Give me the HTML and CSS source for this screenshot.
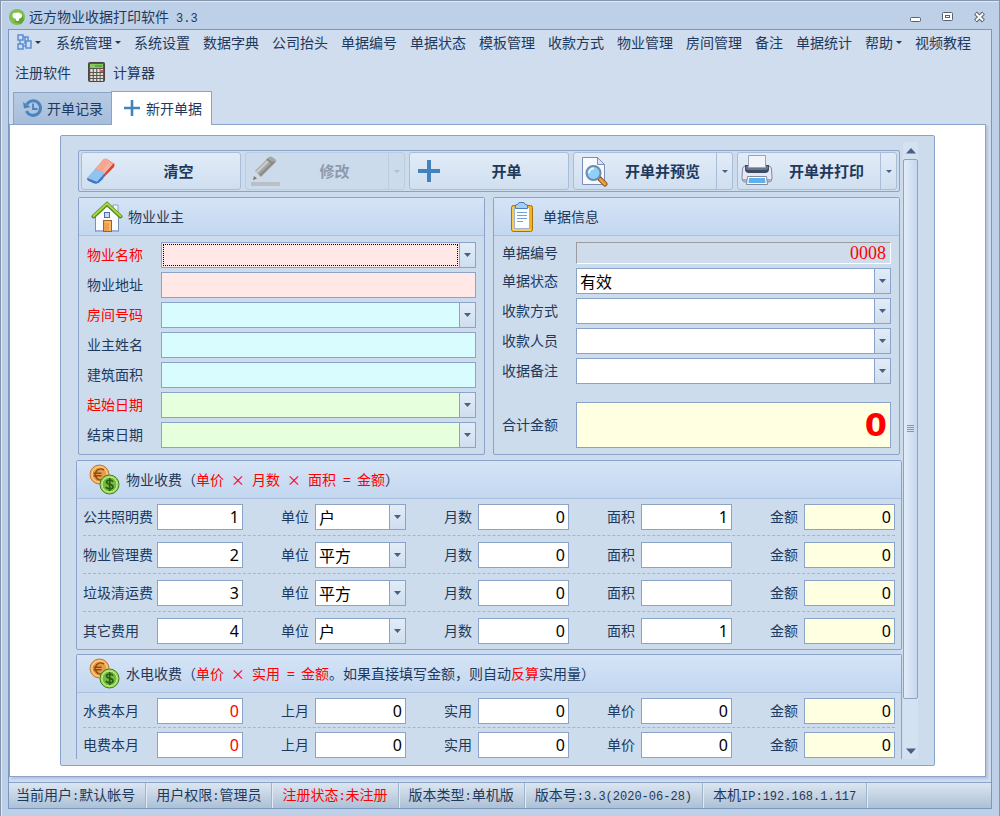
FILE: index.html
```html
<!DOCTYPE html>
<html lang="zh-CN">
<head>
  <meta charset="UTF-8">
  <meta name="viewport" content="width=device-width, initial-scale=1.0">
  <title>远方物业收据打印软件 3.3</title>
  <link rel="stylesheet" href="styles.css">
</head>
<body>
  <div class="window">
    <header class="titlebar">
      <svg class="app-icon" width="16" height="16" viewBox="0 0 16 16">
        <circle cx="8" cy="8" r="8" fill="#7fc04a"/>
        <path d="M5 13l7 2 3-4-2-6z" fill="#5fa52f"/>
        <path d="M3.500 6.500c0-2 1.500-3 3-2.500 1.500-1 4-.8 5 .6 1.600.4 2 2.200 1.200 3.400-.5 1.200-1.600 1.400-2.200 1.200L9.600 12H7.400L6.600 9.500c-2 .2-3.300-1.300-3.100-3z" fill="#fff"/>
      </svg>
      <h1>远方物业收据打印软件<span class="latin title-version">3.3</span></h1>
      <div class="window-buttons">
        <button aria-label="最小化"><svg width="12" height="12" viewBox="0 0 12 12"><rect x=".5" y="6.500" width="10" height="4" rx="1" fill="#fff" stroke="#59626e"/></svg></button>
        <button aria-label="最大化"><svg width="12" height="12" viewBox="0 0 12 12"><rect x=".5" y="1.500" width="10" height="8" rx="1" fill="#fff" stroke="#59626e"/><rect x="3.500" y="4.500" width="4" height="2" fill="#fff" stroke="#59626e"/></svg></button>
        <button aria-label="关闭"><svg width="12" height="12" viewBox="0 0 12 12"><path d="M1.500 2l8 8M9.500 2l-8 8" stroke="#59626e" stroke-width="4"/><path d="M2 2.500l7 7M9 2.500l-7 7" stroke="#fff" stroke-width="2"/></svg></button>
      </div>
    </header>

    <div class="frame">
      <nav class="menu">
        <button class="menu-icon has-caret" aria-label="窗口"><svg width="15" height="16" viewBox="0 0 15 16" fill="none" stroke="#5c8fd6" stroke-width="1.500"><path d="M1 1h5v5H1zM1 10h5v5H1zM9 7h5v7H9zM6 3h5v4M3 6v4M6 12h3M8 3v7"/></svg></button>
        <button class="has-caret">系统管理</button>
        <button>系统设置</button>
        <button>数据字典</button>
        <button>公司抬头</button>
        <button>单据编号</button>
        <button>单据状态</button>
        <button>模板管理</button>
        <button>收款方式</button>
        <button>物业管理</button>
        <button>房间管理</button>
        <button>备注</button>
        <button>单据统计</button>
        <button class="has-caret">帮助</button>
        <button>视频教程</button>
        <button>注册软件</button>
        <button class="menu-calc">
          <svg width="17" height="20" viewBox="0 0 17 20">
            <rect x=".5" y=".5" width="16" height="19" rx="1" fill="#5b5350" stroke="#4b4644"/>
            <rect x="2" y="2" width="13" height="4" fill="#83c95c"/><path d="M7 4h7" stroke="#47802a"/>
            <path d="M3.500 7v12M7 7v12M10.500 7v12M13.800 7v12" stroke="#e4dfd8" stroke-width="2.400"/>
            <path d="M1 10.500h15M1 13.500h15M1 16.500h15" stroke="#5b5350"/>
            <rect x="12.600" y="8" width="2.600" height="2" fill="#f04c3c"/>
          </svg>
          计算器
        </button>
      </nav>

      <div class="tabs" role="tablist">
        <button class="tab" role="tab">
          <svg width="20" height="20" viewBox="0 0 20 20" fill="none" stroke="#4b83bf"><path d="M3.800 6.500A7.300 7.300 0 1 1 3.500 13" stroke-width="3"/><path d="M0 4l1 6.500 6.500-1.500z" fill="#4b83bf" stroke="none"/><path d="M10 5.500V11h4.500" stroke-width="1.800"/></svg>
          开单记录
        </button>
        <button class="tab active" role="tab" aria-selected="true">
          <svg width="16" height="16" viewBox="0 0 16 16"><path d="M8 0v16M0 8h16" stroke="#4282bd" stroke-width="2.600"/></svg>
          新开单据
        </button>
      </div>

      <main class="page">
        <form class="panel">
          <div class="content">
            <div class="toolbar">
              <div class="tool">
                <button type="button" class="tool-main">
                  <svg width="32" height="32" viewBox="0 0 32 32">
                    <path d="M2 24L18 5q2-2 4-1l6 4q2 1 1 3L14 27q-2 2-5 1l-5-2q-2-1-2-2z" fill="#e9503f"/>
                    <path d="M10 14L18 5q2-2 4-1l7 5-9 10z" fill="#f8a592"/>
                    <path d="M20 18l9-10q1 2 0 4L18 23z" fill="#d9422f"/>
                    <path d="M18 16l7-8M19 18l8-9" stroke="#fff" stroke-opacity=".35"/>
                    <path d="M2 23l8-9 10 4-8 9z" fill="#8fc4f2"/>
                    <path d="M2 23l10 4v1.800q-2 .2-4-.8l-4-2q-2-1-2-3zM12 27l8-9-2 6-5 4.500z" fill="#2f7fd0"/>
                  </svg>
                  <span>清空</span>
                </button>
              </div>
              <div class="tool disabled">
                <button type="button" class="tool-main" disabled>
                  <svg width="32" height="32" viewBox="0 0 32 32">
                    <rect x="2" y="27" width="29" height="4" rx="1" fill="#b9c0c8"/>
                    <path d="M4 25l2-8 6 5z" fill="#d8d8d8"/><path d="M4 25l1-4 3 2.500z" fill="#777"/>
                    <path d="M6 16L20 2q1.500-1 3 0l3 2q2 1.500 1 3L12 22z" fill="#a6a6a6"/>
                    <path d="M7.500 17.500L20.500 4.500" stroke="#cfcfcf" stroke-width="2"/><path d="M11 20.500L25 6.500" stroke="#8a8a8a" stroke-width="2"/>
                    <path d="M18 4l6 5" stroke="#878787" stroke-width="2"/>
                  </svg>
                  <span>修改</span>
                </button>
                <button type="button" class="tool-drop" disabled aria-label="修改选项"></button>
              </div>
              <div class="tool">
                <button type="button" class="tool-main">
                  <svg width="32" height="32" viewBox="0 0 32 32"><path d="M16 5v22M5 16h22" stroke="#4282bd" stroke-width="4"/></svg>
                  <span>开单</span>
                </button>
              </div>
              <div class="tool">
                <button type="button" class="tool-main">
                  <svg width="32" height="32" viewBox="0 0 32 32">
                    <path d="M5.500 2.500h15l7 7v20h-22z" fill="#f7f9fd" stroke="#7c8fb8"/><path d="M20.500 2.500v7h7z" fill="#dbe4f3" stroke="#7c8fb8"/>
                    <path d="M22 23l6 6" stroke="#8a5a20" stroke-width="5" stroke-linecap="round"/><path d="M23.500 24.500l4.500 4.500" stroke="#f0a040" stroke-width="3" stroke-linecap="round"/>
                    <circle cx="16.500" cy="18" r="7" fill="#8fd0f5" stroke="#6f8cb0" stroke-width="2"/><path d="M12 18a4.500 4.500 0 0 1 5-4.500" fill="none" stroke="#e8f7ff" stroke-width="2"/>
                  </svg>
                  <span>开单并预览</span>
                </button>
                <button type="button" class="tool-drop" aria-label="预览选项"></button>
              </div>
              <div class="tool">
                <button type="button" class="tool-main">
                  <svg width="32" height="32" viewBox="0 0 32 32">
                    <path d="M4 11q-2 0-2.500 3L1 23q0 4 3 4h24q3 0 3-4l-.5-9q-.5-3-2.500-3z" fill="#e6e9f1" stroke="#8188a0"/>
                    <path d="M2 24h28q-.5 3-2 3H4q-2 0-2-3z" fill="#a5abc0"/>
                    <path d="M4 10h24v4q0 4-4 4H8q-4 0-4-4z" fill="#3c4a62"/><path d="M5 11h22v2q0 2-3 2H8q-3 0-3-2z" fill="#66758f"/>
                    <path d="M7.500.500h17v12h-17z" fill="#f1f3f8" stroke="#9ba2b5"/>
                    <path d="M6.500 21.500h19l1 8h-21z" fill="#fff" stroke="#8188a0"/><path d="M8 23h16l.5 5h-17z" fill="#5fb0ee"/>
                  </svg>
                  <span>开单并打印</span>
                </button>
                <button type="button" class="tool-drop" aria-label="打印选项"></button>
              </div>
            </div>

            <div class="columns">
              <section class="group">
                <h2 class="group-title">
                  <svg width="32" height="32" viewBox="0 0 32 32">
                    <path d="M22 4h5v10h-5z" fill="#f4f6fb" stroke="#8ea0c8"/>
                    <path d="M4.500 15L16 5l11.500 10v15.500h-23z" fill="#fbfcff" stroke="#7c90bf"/>
                    <path d="M5 30h22" stroke="#9fb0d4" stroke-width="2"/>
                    <path d="M2.500 15.500L16 3l13.500 12.500" fill="none" stroke="#5b8a1c" stroke-width="4" stroke-linecap="round"/>
                    <path d="M2.500 15L16 2.500 29.500 15" fill="none" stroke="#a6d84a" stroke-width="2" stroke-linecap="round"/>
                    <rect x="13.500" y="11.500" width="5" height="5" fill="#c8dcf8" stroke="#4f6ca8"/>
                    <rect x="12.500" y="19.500" width="8" height="11" fill="#f0a048" stroke="#a86018"/><path d="M14 21h5v9" fill="none" stroke="#fbd08c"/>
                  </svg>
                  <span>物业业主</span>
                </h2>
                <div class="fields">
                  <div class="field required">
                    <label for="estateName">物业名称</label>
                    <div class="combo pink focused"><select id="estateName"><option></option></select></div>
                  </div>
                  <div class="field">
                    <label for="estateAddr">物业地址</label>
                    <input type="text" id="estateAddr" class="pink">
                  </div>
                  <div class="field required">
                    <label for="roomNo">房间号码</label>
                    <div class="combo cyan"><select id="roomNo"><option></option></select></div>
                  </div>
                  <div class="field">
                    <label for="owner">业主姓名</label>
                    <input type="text" id="owner" class="cyan">
                  </div>
                  <div class="field">
                    <label for="area">建筑面积</label>
                    <input type="text" id="area" class="cyan">
                  </div>
                  <div class="field required">
                    <label for="startDate">起始日期</label>
                    <div class="combo green"><select id="startDate"><option></option></select></div>
                  </div>
                  <div class="field">
                    <label for="endDate">结束日期</label>
                    <div class="combo green"><select id="endDate"><option></option></select></div>
                  </div>
                </div>
              </section>

              <section class="group">
                <h2 class="group-title">
                  <svg width="32" height="32" viewBox="0 0 32 32">
                    <rect x="5.500" y="4.500" width="21" height="26" rx="2" fill="#f5b41c" stroke="#a8700c"/>
                    <path d="M7 6v23h18" fill="none" stroke="#fde07a"/>
                    <path d="M8.500 6.500h15v21h-15z" fill="#fbfdff" stroke="#9fb4d8"/>
                    <path d="M9.500 4q3 0 3.500-2.500h5q.5 2.500 3.500 2.500v3.500h-12z" fill="#a9cdf0" stroke="#4d7fbd"/>
                    <path d="M11 11.500h10M11 14.500h10M11 17.500h10M11 20.500h6" stroke="#6fa0dc"/>
                  </svg>
                  <span>单据信息</span>
                </h2>
                <div class="fields">
                  <div class="field">
                    <label for="billNo">单据编号</label>
                    <input type="text" id="billNo" class="bill-no" value="0008" readonly>
                  </div>
                  <div class="field">
                    <label for="billState">单据状态</label>
                    <div class="combo"><select id="billState"><option>有效</option></select></div>
                  </div>
                  <div class="field">
                    <label for="payType">收款方式</label>
                    <div class="combo"><select id="payType"><option></option></select></div>
                  </div>
                  <div class="field">
                    <label for="payee">收款人员</label>
                    <div class="combo"><select id="payee"><option></option></select></div>
                  </div>
                  <div class="field">
                    <label for="remark">收据备注</label>
                    <div class="combo"><select id="remark"><option></option></select></div>
                  </div>
                  <div class="field total">
                    <label for="total">合计金额</label>
                    <input type="text" id="total" value="0" readonly>
                  </div>
                </div>
              </section>
            </div>

            <section class="group fees">
              <h2 class="group-title">
                <svg width="32" height="32" viewBox="0 0 32 32"><use href="#coins"/></svg>
                <span>物业收费（<em>单价<i class="op">×</i>月数<i class="op">×</i>面积<i class="op half">=</i>金额</em>）</span>
              </h2>
              <div class="fee-row">
                <label for="light">公共照明费</label><input type="text" id="light" value="1">
                <label for="lightUnit">单位</label><div class="combo"><select id="lightUnit"><option>户</option></select></div>
                <label for="lightMonth">月数</label><input type="text" id="lightMonth" value="0">
                <label for="lightArea">面积</label><input type="text" id="lightArea" value="1">
                <label for="lightSum">金额</label><input type="text" id="lightSum" class="sum" value="0">
              </div>
              <div class="fee-row">
                <label for="manage">物业管理费</label><input type="text" id="manage" value="2">
                <label for="manageUnit">单位</label><div class="combo"><select id="manageUnit"><option>平方</option></select></div>
                <label for="manageMonth">月数</label><input type="text" id="manageMonth" value="0">
                <label for="manageArea">面积</label><input type="text" id="manageArea">
                <label for="manageSum">金额</label><input type="text" id="manageSum" class="sum" value="0">
              </div>
              <div class="fee-row">
                <label for="trash">垃圾清运费</label><input type="text" id="trash" value="3">
                <label for="trashUnit">单位</label><div class="combo"><select id="trashUnit"><option>平方</option></select></div>
                <label for="trashMonth">月数</label><input type="text" id="trashMonth" value="0">
                <label for="trashArea">面积</label><input type="text" id="trashArea">
                <label for="trashSum">金额</label><input type="text" id="trashSum" class="sum" value="0">
              </div>
              <div class="fee-row">
                <label for="other">其它费用</label><input type="text" id="other" value="4">
                <label for="otherUnit">单位</label><div class="combo"><select id="otherUnit"><option>户</option></select></div>
                <label for="otherMonth">月数</label><input type="text" id="otherMonth" value="0">
                <label for="otherArea">面积</label><input type="text" id="otherArea" value="1">
                <label for="otherSum">金额</label><input type="text" id="otherSum" class="sum" value="0">
              </div>
            </section>

            <section class="group fees meters">
              <h2 class="group-title">
                <svg width="32" height="32" viewBox="0 0 32 32">
                  <g id="coins">
                    <circle cx="10.500" cy="10.500" r="9.500" fill="#f3b266" stroke="#c07a2c"/>
                    <circle cx="10.500" cy="10.500" r="7.500" fill="#e89b48" stroke="#fbd9a6"/>
                    <path d="M15 6a5.500 5.500 0 1 0 0 9M4.500 9.300h8M4.500 11.700h8" fill="none" stroke="#8a4e12" stroke-width="1.600"/>
                    <circle cx="20.500" cy="20.500" r="9.500" fill="#9cd85c" stroke="#3f7f1c"/>
                    <circle cx="20.500" cy="20.500" r="7.500" fill="#74bb3c" stroke="#d0f09c"/>
                    <path d="M24 17.700c-.8-2-6.500-2.200-6.500.4 0 2.800 6.500 1.600 6.500 4.600 0 2.800-6 2.600-7 .2M20.700 14v13" fill="none" stroke="#2c5e14" stroke-width="1.700"/>
                  </g>
                </svg>
                <span>水电收费（<em>单价<i class="op">×</i>实用<i class="op half">=</i>金额</em>。如果直接填写金额，则自动<em>反算</em>实用量）</span>
              </h2>
              <div class="fee-row">
                <label for="water">水费本月</label><input type="text" id="water" class="red" value="0">
                <label for="waterLast">上月</label><input type="text" id="waterLast" value="0">
                <label for="waterUsed">实用</label><input type="text" id="waterUsed" value="0">
                <label for="waterPrice">单价</label><input type="text" id="waterPrice" value="0">
                <label for="waterSum">金额</label><input type="text" id="waterSum" class="sum" value="0">
              </div>
              <div class="fee-row">
                <label for="power">电费本月</label><input type="text" id="power" class="red" value="0">
                <label for="powerLast">上月</label><input type="text" id="powerLast" value="0">
                <label for="powerUsed">实用</label><input type="text" id="powerUsed" value="0">
                <label for="powerPrice">单价</label><input type="text" id="powerPrice" value="0">
                <label for="powerSum">金额</label><input type="text" id="powerSum" class="sum" value="0">
              </div>
            </section>
          </div>

          <div class="scrollbar">
            <button type="button" aria-label="向上"><svg width="10" height="6" viewBox="0 0 10 6"><path d="M0 5.500L5 0l5 5.500z" fill="#4a5f84"/></svg></button>
            <div class="thumb"><span class="grip"></span></div>
            <div class="track"></div>
            <button type="button" aria-label="向下"><svg width="10" height="6" viewBox="0 0 10 6"><path d="M0 .500L5 6l5-5.500z" fill="#4a5f84"/></svg></button>
          </div>
        </form>
      </main>

      <footer class="statusbar">
        <span>当前用户<b class="latin">:</b>默认帐号</span>
        <span>用户权限<b class="latin">:</b>管理员</span>
        <span class="warn">注册状态<b class="latin">:</b>未注册</span>
        <span>版本类型<b class="latin">:</b>单机版</span>
        <span>版本号<b class="latin">:3.3(2020-06-28)</b></span>
        <span>本机<b class="latin">IP:192.168.1.117</b></span>
      </footer>
    </div>
  </div>
</body>
</html>
```

FILE: styles.css
```css
html, body {
  margin: 0;
  padding: 0;
}

* {
  box-sizing: border-box;
}

body {
  font-family: "Noto Sans CJK SC", sans-serif;
  font-size: 14px;
  line-height: 20px;
  color: #1e395b;
}

button, input, select {
  font: inherit;
  color: inherit;
  margin: 0;
}

button {
  padding: 0;
  border: none;
  background: none;
}

svg {
  display: block;
  flex: none;
}

.latin {
  font-family: "Liberation Mono", monospace;
  font-size: 12px;
  font-weight: normal;
}

/* window */
.window {
  display: flex;
  flex-direction: column;
  min-height: 100vh;
  padding: 0 7px 7px;
  border: 1px solid #8795ab;
  background: #bed0e7;
  box-shadow: inset 0 1px 0 #dfe9f5, inset 1px 0 0 #dfe9f5;
}

.titlebar {
  display: flex;
  align-items: center;
  height: 28px;
  padding: 4px 6px 0 1px;
}

.titlebar h1 {
  flex: 1;
  margin: 0 0 0 4px;
  font-size: 14px;
  font-weight: normal;
}

.title-version {
  margin-left: 7px;
}

.window-buttons {
  display: flex;
  gap: 20px;
}

.frame {
  flex: 1;
  display: flex;
  flex-direction: column;
  border: 1px solid #7a98bf;
  background: #cfddee;
}

/* menu */
.menu {
  display: flex;
  flex-wrap: wrap;
  column-gap: 1px;
}

.menu button {
  display: flex;
  align-items: center;
  height: 30px;
  padding: 0 6px 6px;
  white-space: nowrap;
}

.menu .menu-icon {
  padding-left: 8px;
  padding-right: 8px;
}

.has-caret::after {
  content: "";
  margin-left: 3px;
  border: 3px solid transparent;
  border-top-color: #1e395b;
  border-bottom: none;
}

.menu .menu-calc {
  gap: 8px;
  padding-left: 10px;
}

/* tabs */
.tabs {
  display: flex;
  align-items: flex-end;
  padding: 1px 4px 0;
}

.tab {
  display: flex;
  align-items: center;
  gap: 4px;
  height: 32px;
  padding: 0 8px 2px 9px;
  border: 1px solid #8ba3c8;
  border-right: none;
  border-bottom: none;
  background: linear-gradient(#b7cbe3, #a6bddb);
}

.tab.active {
  position: relative;
  height: 34px;
  margin-bottom: -1px;
  padding: 0 9px 2px 12px;
  gap: 6px;
  border-right: 1px solid #8ba3c8;
  background: #fff;
}

.page {
  flex: 1;
  display: flex;
  margin: 0 5px 5px 0;
  padding: 10px 50px;
  border: 1px solid #8ba3c8;
  background: #fff;
  box-shadow: 2px 2px 2px #b4c4da;
}

.panel {
  flex: 1;
  display: flex;
  gap: 1px;
  min-width: 0;
  padding: 6px 16px 6px 15px;
  border: 1px solid #8ba3c8;
  border-radius: 2px;
  background: #cddcec;
}

.content {
  flex: 1;
  min-width: 0;
  padding-top: 8px;
}

/* toolbar */
.toolbar {
  display: flex;
  gap: 4px;
  margin: 0 2px 5px;
  padding: 1px 2px;
  border: 1px solid #8ba3c8;
  border-radius: 2px;
}

.tool {
  flex: 1;
  display: flex;
  height: 38px;
  border: 1px solid #a9bdd9;
  border-radius: 3px;
  background: linear-gradient(#e2ecf8, #cfdeef);
}

.tool-main {
  flex: 1;
  display: flex;
  align-items: center;
  padding-left: 3px;
  font-size: 15px;
  font-weight: bold;
}

.tool-main span {
  flex: 1;
  text-align: center;
}

.tool-drop {
  display: flex;
  align-items: center;
  justify-content: center;
  width: 16px;
  border-left: 1px solid #a9bdd9;
}

.tool-drop::before {
  content: "";
  border: 3px solid transparent;
  border-top-color: #4a5f84;
  border-bottom: none;
}

.tool.disabled {
  background: #ccdbeb;
  border-color: #bccde0;
  color: #8d9aad;
}

.tool.disabled .tool-drop {
  border-color: #bccde0;
}

.tool.disabled .tool-drop::before {
  border-top-color: #b3bcc8;
}

/* groups */
.columns {
  display: grid;
  grid-template-columns: repeat(2, minmax(0, 1fr));
  gap: 8px;
  margin: 0 2px 5px;
}

.group {
  border: 1px solid #8ba3c8;
  border-radius: 2px;
}

.group-title {
  display: flex;
  align-items: center;
  gap: 5px;
  height: 38px;
  margin: 0;
  padding-left: 12px;
  border-bottom: 1px solid #a9c0de;
  background: linear-gradient(#d5e4f6, #c3d7f0);
  font-size: 14px;
  font-weight: normal;
}

.group-title span, .field label, .fee-row label {
  padding-bottom: 2px;
}

.group-title em {
  color: #f00;
  font-style: normal;
}

.op {
  display: inline-block;
  width: 14px;
  margin: 0 7px;
  text-align: center;
  font-style: normal;
}

.op.half {
  width: 7px;
}

.fields {
  display: flex;
  flex-direction: column;
  gap: 4px;
  padding: 6px 8px;
}

.field {
  display: flex;
  align-items: center;
}

.field label {
  width: 74px;
}

.field.required label {
  color: #f00;
}

.field input, .field .combo {
  flex: 1;
  min-width: 0;
}

input[type="text"], .combo {
  height: 26px;
  border: 1px solid #8ba3c8;
  border-radius: 0;
  background: #fff;
  color: #000;
}

input[type="text"] {
  width: 100%;
  min-width: 0;
  padding: 0 3px;
  font-family: "Noto Sans", sans-serif;
  font-size: 16px;
}

.combo {
  display: grid;
  grid-template-columns: minmax(0, 1fr) 16px;
  grid-template-rows: 24px;
}

.combo select {
  grid-area: 1 / 1 / 2 / 3;
  min-width: 0;
  padding: 0 18px 0 3px;
  border: none;
  border-radius: 0;
  background: none;
  appearance: none;
  font-size: 16px;
}

.combo::after {
  content: "";
  grid-area: 1 / 2;
  border-left: 1px solid #8ba3c8;
  background: url("data:image/svg+xml,%3Csvg xmlns='http://www.w3.org/2000/svg' width='7' height='4'%3E%3Cpath d='M0 0h7L3.500 4z' fill='%234a5f84'/%3E%3C/svg%3E") center no-repeat, linear-gradient(#e2ecf8, #cfdeef);
  pointer-events: none;
}

.combo.focused::before {
  content: "";
  grid-area: 1 / 1;
  margin: 1px;
  border: 1px dotted #000;
  pointer-events: none;
}

input.pink, .combo.pink {
  background: #ffe8e6;
}

input.cyan, .combo.cyan {
  background: #d9fdff;
}

input.green, .combo.green {
  background: #e6ffdc;
}

.field .bill-no {
  height: 22px;
  padding: 0 4px;
  border-color: #9c9c9c #fff #fff #9c9c9c;
  background: #cfdcec;
  color: #f00;
  font-family: "Liberation Serif", serif;
  font-size: 18px;
  text-align: right;
}

.field.total {
  margin-top: 14px;
}

.field.total input {
  height: 46px;
  background: #ffffe1;
  color: #f00;
  font-family: "DejaVu Sans", sans-serif;
  font-size: 32px;
  font-weight: bold;
  text-align: right;
}

/* fee rows */
.fees {
  margin-bottom: 4px;
}

.fee-row {
  display: grid;
  grid-template-columns: 74px minmax(0, 86fr) repeat(4, 72px minmax(0, 91fr));
  align-items: center;
  margin: 0 6px;
  padding: 5px 0;
}

.fee-row + .fee-row {
  padding-top: 6px;
  border-top: 1px dashed #a3b5cf;
}

.fee-row label {
  padding-right: 6px;
  text-align: right;
  white-space: nowrap;
}

.fee-row label:first-child {
  padding-right: 0;
  text-align: left;
}

.fee-row input {
  text-align: right;
}

.fee-row .sum {
  background: #ffffe1;
}

.fee-row .red {
  color: #f00;
}

.meters {
  margin-bottom: 0;
  border-bottom: none;
  border-radius: 2px 2px 0 0;
}

.meters .fee-row {
  padding-bottom: 3px;
}

.meters .fee-row + .fee-row {
  padding: 4px 0 1px;
}

/* scrollbar */
.scrollbar {
  display: flex;
  flex-direction: column;
  width: 15px;
  background: #d4e1f1;
}

.scrollbar button {
  display: flex;
  align-items: center;
  justify-content: center;
  height: 17px;
}

.thumb {
  flex: 25;
  display: flex;
  align-items: center;
  justify-content: center;
  border: 1px solid #8ba3c8;
  border-radius: 2px;
  background: linear-gradient(to right, #e2ecf8, #c6d8ee);
}

.track {
  flex: 2;
}

.grip {
  width: 7px;
  height: 7px;
  background: repeating-linear-gradient(#7f97bd 0 1px, transparent 1px 2px);
}

/* status bar */
.statusbar {
  display: flex;
  height: 26px;
  border-top: 1px solid #8ba3c8;
  background: linear-gradient(#dbe6f2, #adc0d4);
}

.statusbar span {
  padding: 1px 10px 0;
  border-right: 1px solid #9fb3cb;
  box-shadow: 1px 0 0 #e3ecf6;
  white-space: nowrap;
}

.statusbar span:first-child {
  padding-left: 7px;
}

.statusbar .warn {
  color: #f00;
}
```
